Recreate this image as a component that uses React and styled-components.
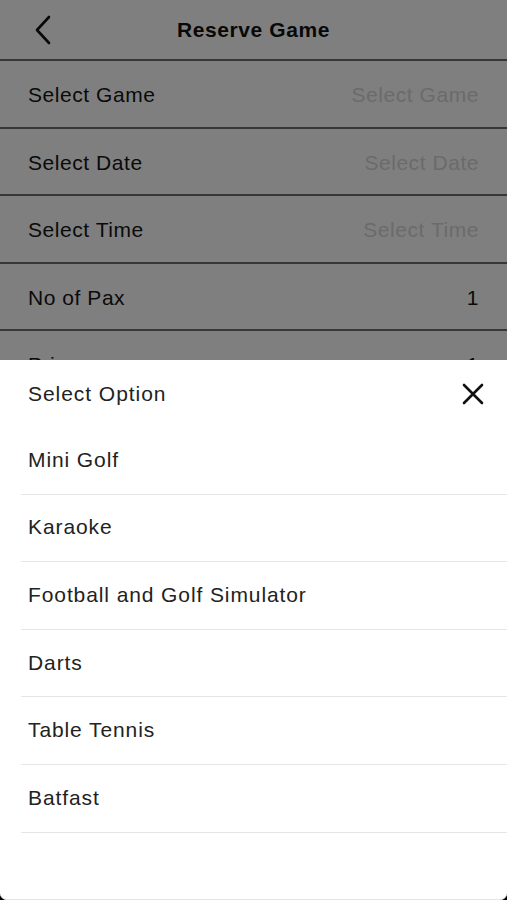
import React from "react";
import styled, { createGlobalStyle } from "styled-components";

const GlobalStyle = createGlobalStyle`
  html, body {
    margin: 0;
    padding: 0;
    background: #000;
  }
  body {
    font-family: "Liberation Sans", Arial, sans-serif;
  }
  * {
    box-sizing: border-box;
  }
`;

const Screen = styled.div`
  position: relative;
  width: 507px;
  height: 900px;
  overflow: hidden;
  background: #000;
`;

const Page = styled.div`
  height: 900px;
  background: #fff;
  border-radius: 0 0 7px 7px;
  overflow: hidden;
`;

const Header = styled.div`
  height: 61px;
  display: flex;
  align-items: center;
  justify-content: center;
  position: relative;
  border-bottom: 2px solid #6e6e6e;
`;

const BackButton = styled.div`
  position: absolute;
  left: 34px;
  top: 15px;
  width: 20px;
  height: 30px;
`;

const Title = styled.div`
  font-size: 21px;
  font-weight: bold;
  letter-spacing: 0.6px;
  color: #111;
`;

const Row = styled.div`
  height: 67.5px;
  display: flex;
  align-items: center;
  justify-content: space-between;
  padding: 3px 28px 0;
  border-bottom: 2px solid #6e6e6e;
  font-size: 21px;
  letter-spacing: 0.55px;
`;

const Label = styled.span`
  color: #141414;
`;

const Value = styled.span`
  color: ${(p) => (p.placeholder ? "#d6d6d6" : "#141414")};
`;

const Overlay = styled.div`
  position: absolute;
  inset: 0;
  background: rgba(0, 0, 0, 0.5);
  border-radius: 0 0 7px 7px;
`;

const Sheet = styled.div`
  position: absolute;
  left: 0;
  right: 0;
  top: 360px;
  bottom: 0;
  background: #fff;
  border-radius: 0 0 7px 7px;
  border-bottom: 1px solid #e4e4e4;
`;

const SheetHeader = styled.div`
  height: 67px;
  display: flex;
  align-items: center;
  justify-content: space-between;
  padding: 0 22px 0 28px;
  font-size: 21px;
  letter-spacing: 0.95px;
  color: #222;
`;

const CloseButton = styled.div`
  width: 24px;
  height: 24px;
  display: flex;
  align-items: center;
  justify-content: center;
`;

const OptionList = styled.div`
  margin-left: 21px;
`;

const Option = styled.div`
  height: 67.6px;
  display: flex;
  align-items: center;
  padding: 0 0 1px 7px;
  border-bottom: 1.5px solid #e6e6e6;
  font-size: 21px;
  letter-spacing: 0.9px;
  color: #222;
`;

const fields = [
  { label: "Select Game", value: "Select Game", placeholder: true },
  { label: "Select Date", value: "Select Date", placeholder: true },
  { label: "Select Time", value: "Select Time", placeholder: true },
  { label: "No of Pax", value: "1" },
  { label: "Price", value: "1" },
];

const options = [
  "Mini Golf",
  "Karaoke",
  "Football and Golf Simulator",
  "Darts",
  "Table Tennis",
  "Batfast",
];

export default function App() {
  return (
    <Screen>
      <GlobalStyle />
      <Page>
        <Header>
          <BackButton>
            <svg width="20" height="30" viewBox="0 0 20 30">
              <path
                d="M15 2 L3 15 L15 28"
                fill="none"
                stroke="#111"
                strokeWidth="2.6"
                strokeLinecap="round"
                strokeLinejoin="round"
              />
            </svg>
          </BackButton>
          <Title>Reserve Game</Title>
        </Header>
        {fields.map((f) => (
          <Row key={f.label}>
            <Label>{f.label}</Label>
            <Value placeholder={f.placeholder}>{f.value}</Value>
          </Row>
        ))}
      </Page>
      <Overlay />
      <Sheet>
        <SheetHeader>
          <span>Select Option</span>
          <CloseButton>
            <svg width="22" height="22" viewBox="0 0 22 22">
              <path
                d="M2 2 L20 20 M20 2 L2 20"
                stroke="#111"
                strokeWidth="2.6"
                strokeLinecap="round"
              />
            </svg>
          </CloseButton>
        </SheetHeader>
        <OptionList>
          {options.map((o) => (
            <Option key={o}>{o}</Option>
          ))}
        </OptionList>
      </Sheet>
    </Screen>
  );
}
